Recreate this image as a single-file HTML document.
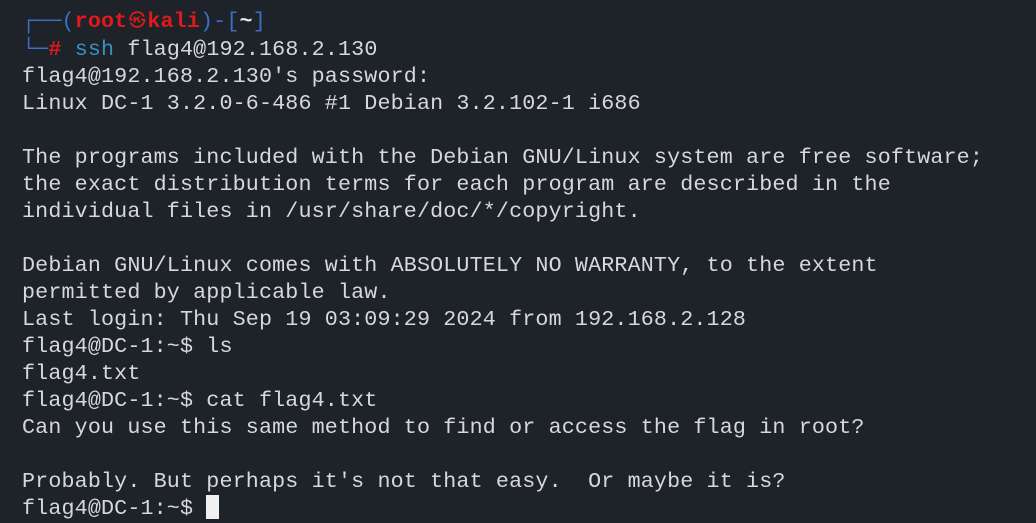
<!DOCTYPE html>
<html><head><style>
html,body{margin:0;padding:0;width:1036px;height:523px;overflow:hidden;background:#1e2229;}
pre{margin:0;position:absolute;left:22px;top:8px;font-family:"Liberation Mono","DejaVu Sans Mono",monospace;font-size:21.7px;line-height:27px;color:#d6d8da;letter-spacing:0.15px;}
.b{color:#3a6fc4}.r{color:#e0191c;font-weight:bold}.c{color:#3a8fc0}
.at{display:inline-block;width:20px;text-align:center;font-size:17px;font-weight:normal;vertical-align:1px}
.cur{display:inline-block;width:13px;height:24px;background:#f0f0f0;vertical-align:-5px}
</style></head><body>
<pre><span class="b">┌──(</span><span class="r">root<span class="at">㉿</span>kali</span><span class="b">)-[</span><span style="color:#e8e8e8;font-weight:bold">~</span><span class="b">]</span>
<span class="b">└─</span><span class="r">#</span> <span class="c">ssh</span> flag4@192.168.2.130
flag4@192.168.2.130's password:
Linux DC-1 3.2.0-6-486 #1 Debian 3.2.102-1 i686

The programs included with the Debian GNU/Linux system are free software;
the exact distribution terms for each program are described in the
individual files in /usr/share/doc/*/copyright.

Debian GNU/Linux comes with ABSOLUTELY NO WARRANTY, to the extent
permitted by applicable law.
Last login: Thu Sep 19 03:09:29 2024 from 192.168.2.128
flag4@DC-1:~$ ls
flag4.txt
flag4@DC-1:~$ cat flag4.txt
Can you use this same method to find or access the flag in root?

Probably. But perhaps it's not that easy.  Or maybe it is?
flag4@DC-1:~$ <span class="cur"></span></pre>
</body></html>
